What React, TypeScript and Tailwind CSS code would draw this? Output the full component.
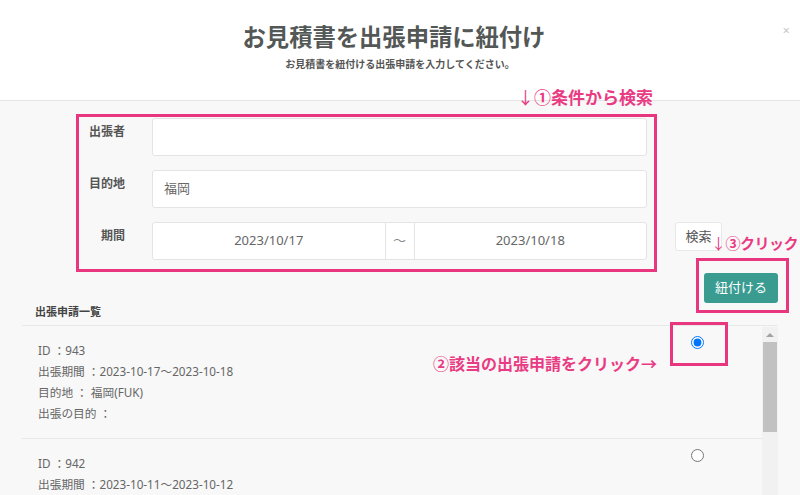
import React from 'react'

const pink = 'text-[#e93b83]'

type Trip = { id: number; lines: string[]; checked?: boolean }

const trips: Trip[] = [
    {
        id: 943,
        checked: true,
        lines: ['ID ：943', '出張期間 ：2023-10-17～2023-10-18', '目的地 ： 福岡(FUK)', '出張の目的 ：'],
    },
    {
        id: 942,
        lines: ['ID ：942', '出張期間 ：2023-10-11～2023-10-12'],
    },
]

function FormRow({ label, children }: { label: string; children: React.ReactNode }) {
    return (
        <div className="grid grid-cols-[46px_1fr] gap-x-[27px] h-[38px]">
            <div className="text-right pt-[5px] text-[12px] leading-[18px] font-bold text-[#555]">{label}</div>
            {children}
        </div>
    )
}

export default function App() {
    return (
        <div
            className="relative w-[800px] h-[495px] overflow-hidden bg-[#f8f8f8]"
            style={{ fontFamily: '"Noto Sans", "Noto Sans CJK JP", sans-serif' }}
        >
            <header className="relative h-[101px] bg-white border-b border-[#e6e6e6] flex flex-col items-center">
                <h1 className="mt-[21px] pr-[12px] text-[23.3px] leading-[32px] font-bold text-[#535857]">お見積書を出張申請に紐付け</h1>
                <p className="mt-[4px] text-[10px] leading-[14px] font-bold text-[#555]">お見積書を紐付ける出張申請を入力してください。</p>
                <button className="absolute right-[10px] top-[21px] text-[13px] leading-[18px] text-[#c8c8c8]">×</button>
            </header>

            {/* annotations */}
            <div className={`absolute left-[517px] top-[88px] whitespace-nowrap text-[17px] leading-[20px] font-bold ${pink}`}>
                <span className="font-normal">↓</span>①条件から検索
            </div>
            <div className={`absolute left-[711px] top-[233px] whitespace-nowrap text-[15px] leading-[20px] font-bold tracking-[-0.5px] ${pink}`}>
                <span className="font-normal">↓</span>③クリック
            </div>
            <div className={`absolute left-[433px] top-[354px] whitespace-nowrap text-[16px] leading-[20px] font-bold ${pink}`}>
                ②該当の出張申請をクリック→
            </div>
            <div className="absolute left-[670px] top-[322px] w-[58px] h-[44px] border-[3px] border-[#e8367f]" />

            <div className="flex items-start pl-[76px] pt-[13px]">
                <div className="w-[581px] h-[158px] border-[3px] border-[#e8367f] pt-[1px] pr-[7px] flex flex-col gap-[14px]">
                    <FormRow label="出張者">
                        <div className="bg-white border border-[#e4e4e4] rounded-[3px]" />
                    </FormRow>
                    <FormRow label="目的地">
                        <div className="bg-white border border-[#e4e4e4] rounded-[3px] flex items-center pl-[11px] text-[13px] text-[#666]">
                            福岡
                        </div>
                    </FormRow>
                    <FormRow label="期間">
                        <div className="flex bg-white border border-[#e4e4e4] rounded-[3px] text-[13px] text-[#666]">
                            <div className="flex-1 flex items-center justify-center">2023/10/17</div>
                            <div className="w-[30px] border-x border-[#e4e4e4] flex items-center justify-center text-[#888]">～</div>
                            <div className="flex-1 flex items-center justify-center">2023/10/18</div>
                        </div>
                    </FormRow>
                </div>

                <div className="ml-[18px] mt-[108px] w-[114px] flex flex-col gap-[7px]">
                    <button className="self-start w-[47px] h-[29px] bg-white border border-[#e8e8e8] rounded-[3px] text-[13px] text-[#555]">
                        検索
                    </button>
                    <div className="self-end w-[93px] h-[55px] border-[3px] border-[#e8367f] pt-[12px] pl-[5px]">
                        <button className="w-[74px] h-[30px] bg-[#3a9b91] rounded-[3px] text-[13px] text-white">紐付ける</button>
                    </div>
                </div>
            </div>

            <div className="-mt-[9px] pl-[35px] text-[11px] leading-[16px] font-bold text-[#444]">出張申請一覧</div>

            <div className="mt-[5px] ml-[22px] w-[756px] h-[200px] border-t border-[#e8e8e8] flex">
                <div className="flex-1">
                    {trips.map(t => (
                        <div key={t.id} className="flex justify-between border-b border-[#e8e8e8]">
                            <div className="pl-[16px] pt-[14px] pb-[14px] text-[11.7px] leading-[21px] text-[#666]">
                                {t.lines.map(l => (
                                    <div key={l}>{l}</div>
                                ))}
                            </div>
                            <div className="pt-[10px] pr-[58px]">
                                <input type="radio" name="trip" defaultChecked={t.checked} className="block w-[13px] h-[13px] m-0" />
                            </div>
                        </div>
                    ))}
                </div>
                <div className="w-[16px] mt-[1px] bg-[#f1f1f1] flex flex-col">
                    <div className="h-[15px] flex items-center justify-center">
                        <div className="w-0 h-0 border-l-[4px] border-r-[4px] border-b-[4px] border-l-transparent border-r-transparent border-b-[#a3a3a3]" />
                    </div>
                    <div className="h-[90px] mx-[1px] bg-[#c1c1c1]" />
                </div>
            </div>
        </div>
    )
}
